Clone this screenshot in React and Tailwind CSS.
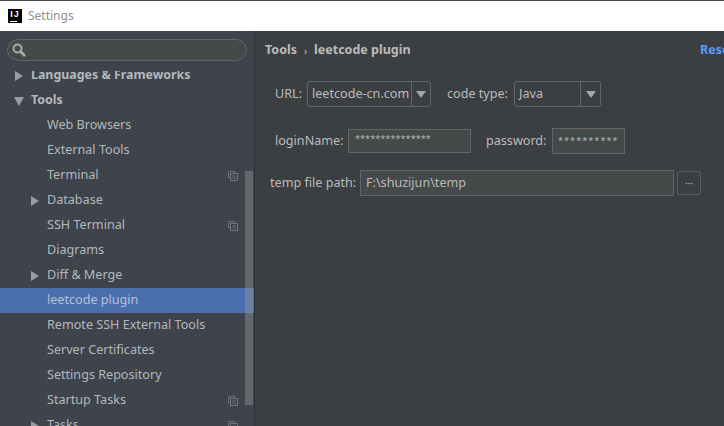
const rows = [
  { label: "Languages & Frameworks", level: 0, bold: true, arrow: "right" },
  { label: "Tools", level: 0, bold: true, arrow: "down" },
  { label: "Web Browsers", level: 1 },
  { label: "External Tools", level: 1 },
  { label: "Terminal", level: 1, copy: true },
  { label: "Database", level: 1, arrow: "right" },
  { label: "SSH Terminal", level: 1, copy: true },
  { label: "Diagrams", level: 1 },
  { label: "Diff & Merge", level: 1, arrow: "right" },
  { label: "leetcode plugin", level: 1, active: true },
  { label: "Remote SSH External Tools", level: 1 },
  { label: "Server Certificates", level: 1 },
  { label: "Settings Repository", level: 1 },
  { label: "Startup Tasks", level: 1, copy: true },
  { label: "Tasks", level: 1, arrow: "right", copy: true },
];

const Arrow = ({ dir }) => (
  <svg width="10" height="10" viewBox="0 0 10 10" className="fill-[#9a9da0]">
    {dir === "down" ? <polygon points="0,1 10,1 5,10" /> : <polygon points="1,0 9,5 1,10" />}
  </svg>
);

const CopyIcon = () => (
  <svg width="10" height="10" viewBox="0 0 10 10" fill="none" stroke="#6f7478" strokeWidth="1">
    <path d="M6.5 2.5V.5H.5v6h2" />
    <rect x="2.5" y="2.5" width="7" height="7" />
    <path d="M4.5 5h3M4.5 7h3" />
  </svg>
);

const TreeRow = ({ row }) => (
  <div className={`relative flex items-center h-[25px] shrink-0 ${row.active ? "bg-[#4b6eaf]" : ""}`}>
    {row.arrow && (
      <span className={`absolute flex ${row.level === 0 ? "left-[14px]" : "left-[30px]"}`}>
        <Arrow dir={row.arrow} />
      </span>
    )}
    <span className={`${row.level === 0 ? "pl-[31px]" : "pl-[47px]"} ${row.bold ? "font-bold text-[12.4px]" : ""} ${row.active ? "text-[#b5c2d6]" : "text-[#b4b8bb]"}`}>
      {row.label}
    </span>
    {row.copy && (
      <span className="absolute left-[228px] flex">
        <CopyIcon />
      </span>
    )}
  </div>
);

const Combo = ({ value, width, textWidth }) => (
  <div className={`flex h-[26px] ${width} border border-[#646464] rounded-[3px] bg-[#3c3f41]`}>
    <div className={`${textWidth} border-r border-[#646464] pl-[4px] leading-[24px] text-[#bbbbbb] overflow-hidden whitespace-nowrap`}>{value}</div>
    <div className="flex-1 flex items-center justify-center">
      <svg width="10" height="7" viewBox="0 0 10 7" className="fill-[#a4a6a8]">
        <polygon points="0,0 10,0 5,7" />
      </svg>
    </div>
  </div>
);

export default function App() {
  return (
    <div className="w-[724px] h-[426px] overflow-hidden flex flex-col bg-[#3c3f41] text-[12.6px] font-['Noto_Sans',sans-serif]">
      {/* title bar */}
      <div className="h-[31px] shrink-0 bg-white border-t border-[#4a4a4a] flex items-center pl-[8px] gap-[6px]">
        <div className="w-[14px] h-[14px] bg-black relative flex justify-center">
          <span className="text-white text-[9px] font-bold leading-[10px] tracking-[1px] font-['Liberation_Sans',sans-serif]">IJ</span>
          <span className="absolute left-[2px] bottom-[1px] w-[7px] h-px bg-white"></span>
        </div>
        <span className="text-[#8f8f8f] text-[12px]">Settings</span>
      </div>

      <div className="flex-1 flex min-h-0">
        {/* sidebar */}
        <div className="relative w-[254px] shrink-0 bg-[#3e434c] flex flex-col">
          <div className="h-[40px] shrink-0 pt-[8px] pl-[7px]">
            <div className="w-[240px] h-[22px] rounded-full border border-[#62666a] bg-[#45494a] flex items-center pl-[4px]">
              <svg width="14" height="14" viewBox="0 0 14 14" fill="none" stroke="#a9abad">
                <circle cx="5.5" cy="5.5" r="4" strokeWidth="2" />
                <path d="M8.5 8.5l4.5 4.5" strokeWidth="2.6" />
              </svg>
            </div>
          </div>
          <div className="flex-1 overflow-hidden">
            <div className="flex flex-col -mt-[8px]">
              {rows.map((row) => (
                <TreeRow key={row.label} row={row} />
              ))}
            </div>
          </div>
          <div className="absolute left-[245px] top-[140px] w-[8px] h-[234px] bg-[#9a9da3]/40"></div>
        </div>
        <div className="w-px shrink-0 bg-[#323232]"></div>

        {/* content */}
        <div className="flex-1 min-w-0 relative overflow-hidden">
          <div className="flex items-center h-[38px] pl-[10px] font-bold text-[12.5px] text-[#bbbbbb]">
            <span>Tools</span>
            <span className="font-normal text-[10px] mx-[7px] pt-[2px]">›</span>
            <span>leetcode plugin</span>
            <span className="absolute left-[445px] text-[#589df6]">Reset</span>
          </div>
          <div className="flex items-center h-[26px] mt-[12px] pl-[20px] text-[#bbbbbb]">
            <span className="w-[32px]">URL:</span>
            <Combo value="leetcode-cn.com" width="w-[124px]" textWidth="w-[104px]" />
            <span className="ml-[16px] w-[67px]">code type:</span>
            <Combo value="Java" width="w-[87px]" textWidth="w-[66px]" />
          </div>
          <div className="flex items-center h-[26px] mt-[21px] pl-[20px] text-[#bbbbbb]">
            <span className="w-[73px]">loginName:</span>
            <div className="w-[123px] h-[24px] border border-[#646464] bg-[#45494a] pl-[6px] leading-[18px] text-[9.2px]">***************</div>
            <span className="ml-[15px] w-[66px]">password:</span>
            <div className="w-[73px] h-[26px] border border-[#646464] bg-[#45494a] pl-[5px] leading-[23px] tracking-[1px] text-[9.2px]">**********</div>
          </div>
          <div className="flex items-center h-[26px] mt-[16px] pl-[15px] text-[#bbbbbb]">
            <span className="w-[90px]">temp file path:</span>
            <div className="w-[314px] h-[26px] border border-[#646464] bg-[#45494a] pl-[5px] leading-[24px]">F:\shuzijun\temp</div>
            <div className="ml-[3px] w-[24px] h-[24px] border border-[#5a5d5f] rounded-[2px] flex items-center justify-center text-[10px] leading-none">···</div>
          </div>
        </div>
      </div>
    </div>
  );
}
